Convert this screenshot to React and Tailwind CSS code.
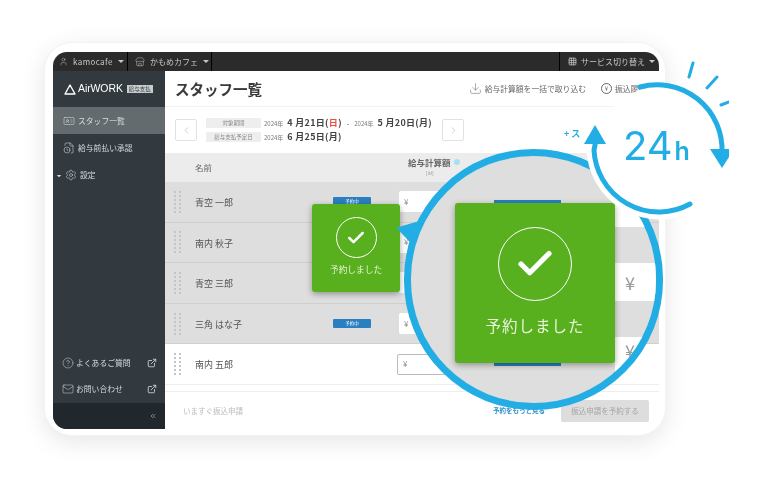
import { User, Store, Grid3x3, Download, ChevronLeft, ChevronRight, ChevronsLeft, IdCard, FileClock, Settings, CircleHelp, Mail, ExternalLink, Check } from "lucide-react";

const rows = [
  { name: "青空 一郎", badge: true, gray: true },
  { name: "南内 秋子", gray: true },
  { name: "青空 三郎", gray: true },
  { name: "三角 はな子", badge: true, gray: true },
  { name: "南内 五郎", gray: false },
];

const navItems = [
  { label: "スタッフ一覧", Icon: IdCard, active: true },
  { label: "給与前払い承認", Icon: FileClock },
  { label: "設定", Icon: Settings, caret: true },
];

function DragHandle() {
  return (
    <div className="grid grid-cols-2 gap-x-[3px] gap-y-[2px] w-[7px]">
      {Array.from({ length: 12 }).map((_, i) => (
        <span key={i} className="w-[2px] h-[2px] bg-[#c4c4c4]" />
      ))}
    </div>
  );
}

function Caret() {
  return <span className="inline-block w-0 h-0 border-x-[3px] border-x-transparent border-t-[3px] border-t-current" />;
}

function TopBar() {
  return (
    <div className="h-[19px] bg-[#2b2b2b] rounded-t-[14px] flex items-center text-[8px] text-[#c8c8c8] shrink-0">
      <div className="w-[75px] h-full flex items-center gap-[5px] pl-[6px] border-r border-black">
        <User size={9} strokeWidth={1.2} />
        <span className="tracking-[0.4px]">kamocafe</span>
        <Caret />
      </div>
      <div className="w-[84px] h-full flex items-center gap-[5px] pl-[7px] border-r border-black">
        <Store size={10} strokeWidth={1.2} />
        <span>かもめカフェ</span>
        <Caret />
      </div>
      <div className="ml-auto w-[100px] h-full flex items-center gap-[4px] pl-[8px] border-l border-black">
        <Grid3x3 size={9} strokeWidth={2} />
        <span>サービス切り替え</span>
        <Caret />
      </div>
    </div>
  );
}

function Sidebar() {
  return (
    <div className="w-[112px] bg-[#323a40] flex flex-col text-[7.8px] text-[#d8dbdc] shrink-0 rounded-bl-[14px] overflow-hidden">
      <div className="h-[36px] flex items-center pl-[11px] gap-[2px]">
        <svg width="12" height="11" viewBox="0 0 12 11" fill="none" stroke="#ffffff" strokeWidth="1.4">
          <path d="M6 1 L11 10 H1 Z" strokeLinejoin="round" />
        </svg>
        <span className="text-[10.5px] text-white tracking-[-0.1px] font-['Liberation_Sans',sans-serif]">AirWORK</span>
        <span className="ml-[2px] w-[26px] bg-[#c9cccd] text-[#323a40] text-[5.5px] text-center leading-[8px]">給与支払</span>
      </div>
      {navItems.map(({ label, Icon, active, caret }) => (
        <div key={label} className={`h-[27px] flex items-center gap-[3px] ${caret ? "pl-[3px]" : "pl-[10px]"} ${active ? "bg-[#646b6f]" : ""}`}>
          {caret && <span className="text-[#d8dbdc] scale-75"><Caret /></span>}
          <Icon size={12} strokeWidth={1.1} />
          <span>{label}</span>
        </div>
      ))}
      <div className="mt-auto">
        <div className="h-[26px] flex items-center pl-[9px] pr-[8px] gap-[2px]">
          <CircleHelp size={12} strokeWidth={1} />
          <span>よくあるご質問</span>
          <ExternalLink size={10} strokeWidth={2} className="ml-auto" />
        </div>
        <div className="h-[26px] mb-[1px] flex items-center pl-[9px] pr-[8px] gap-[2px]">
          <Mail size={12} strokeWidth={1} />
          <span>お問い合わせ</span>
          <ExternalLink size={10} strokeWidth={2} className="ml-auto" />
        </div>
        <div className="h-[26px] bg-[#20282d] flex items-center justify-end pr-[8px]">
          <ChevronsLeft size={8} strokeWidth={1.5} />
        </div>
      </div>
    </div>
  );
}

function Header() {
  return (
    <div className="h-[35px] flex items-center pl-[10px] shrink-0">
      <h1 className="text-[14.5px] font-bold text-[#3a3a3a]">スタッフ一覧</h1>
      <div className="ml-auto flex items-center text-[7.8px] text-[#666] pr-[12px]">
        <Download size={13} strokeWidth={1} />
        <span className="ml-[3px]">給与計算額を一括で取り込む</span>
        <span className="ml-[15px] w-[11px] h-[11px] rounded-full border border-[#666] flex items-center justify-center text-[6px]">¥</span>
        <span className="ml-[3px] w-[32px] overflow-hidden whitespace-nowrap">振込履歴</span>
      </div>
    </div>
  );
}

function DateBar() {
  return (
    <div className="h-[47px] flex items-center pl-[10px] border-t border-[#f2f2f2] shrink-0">
      <div className="w-[22px] h-[22px] border border-[#e2e2e2] rounded-[2px] flex items-center justify-center text-[#aaa]">
        <ChevronLeft size={11} strokeWidth={1.2} />
      </div>
      <div className="ml-[9px] w-[236px] flex flex-col gap-[4px] text-[#444]">
        <div className="flex items-center h-[10px]">
          <span className="w-[55px] h-[10px] bg-[#eeeeee] rounded-[1px] text-[5.5px] text-[#888] text-center leading-[10px]">対象期間</span>
          <span className="ml-[3px] text-[6px] text-[#777]">2024年</span>
          <span className="ml-[4px] text-[9px] font-bold tracking-[0.3px]">4 月21日(<span className="text-[#ef4b3f]">日</span>)</span>
          <span className="mx-[5px] text-[7px]">-</span>
          <span className="text-[6px] text-[#777]">2024年</span>
          <span className="ml-[4px] text-[9px] font-bold tracking-[0.3px]">5 月20日(月)</span>
        </div>
        <div className="flex items-center h-[10px]">
          <span className="w-[55px] h-[10px] bg-[#eeeeee] rounded-[1px] text-[5.5px] text-[#888] text-center leading-[10px]">給与支払予定日</span>
          <span className="ml-[3px] text-[6px] text-[#777]">2024年</span>
          <span className="ml-[4px] text-[9px] font-bold tracking-[0.3px]">6 月25日(月)</span>
        </div>
      </div>
      <div className="w-[22px] h-[22px] border border-[#e2e2e2] rounded-[2px] flex items-center justify-center text-[#aaa]">
        <ChevronRight size={11} strokeWidth={1.2} />
      </div>
      <span className="ml-[100px] mt-[8px] text-[9px] font-bold text-[#22aee5] whitespace-nowrap">+ ス</span>
    </div>
  );
}

function TableHead() {
  return (
    <div className="h-[29px] bg-[#ececec] flex shrink-0 text-[#666]">
      <span className="ml-[30px] self-center text-[8.5px]">名前</span>
      <div className="ml-[196px] mt-[3px] flex flex-col items-center">
        <div className="flex items-center gap-[3px]">
          <span className="text-[8.5px] font-bold">給与計算額</span>
          <span className="w-[6px] h-[6px] rounded-full bg-[#a8dff5]" />
        </div>
        <span className="text-[5px] text-[#999] mr-[8px]">[al]</span>
      </div>
    </div>
  );
}

function StaffRow({ row }) {
  return (
    <div className={`h-[40.6px] flex items-center pl-[9px] border-b ${row.gray ? "bg-[#dedede] border-[#cfcfcf]" : "bg-white border-[#eeeeee]"}`}>
      <DragHandle />
      <span className="ml-[14px] mt-[2px] w-[138px] text-[9px] text-[#555]">{row.name}</span>
      <div className={row.gray ? "w-[66px] flex" : "w-[64px] flex"}>
        {row.badge && <span className="w-[38px] h-[9px] bg-[#2a7fc0] text-white text-[4.5px] leading-[9px] text-center rounded-[1px]">予約中</span>}
      </div>
      <div className={`w-[105px] h-[21px] bg-white rounded-[2px] pl-[5px] flex items-center text-[8px] text-[#888] ${row.gray ? "" : "border border-[#bbb]"}`}>¥</div>
    </div>
  );
}

function Footer() {
  return (
    <div className="mt-auto h-[38px] flex items-center pl-[18px] pr-[10px] border-t border-[#eeeeee] shrink-0">
      <span className="text-[7.5px] text-[#bbbbbb]">いますぐ振込申請</span>
      <span className="ml-auto text-[6.5px] font-bold text-[#2a8fc8]">予約をもっと見る</span>
      <span className="ml-[16px] w-[88px] h-[22px] bg-[#dddddd] rounded-[2px] text-[7.5px] text-[#a5a5a5] leading-[22px] text-center">振込申請を予約する</span>
    </div>
  );
}

function Toast({ className, circle, check, stroke, text }) {
  return (
    <div className={`absolute bg-[#58b01e] rounded-[3px] shadow-[0_2px_6px_rgba(0,0,0,0.35)] flex flex-col items-center text-[#e9f5dc] ${className}`}>
      <div className={`rounded-full border border-white flex items-center justify-center text-white ${circle}`}>
        <Check size={check} strokeWidth={stroke} />
      </div>
      <span className={text}>予約しました</span>
    </div>
  );
}

function Magnifier() {
  return (
    <div className="absolute left-[404px] top-[149px] w-[259px] h-[261px] rounded-full border-[7px] border-[#22aee5] bg-[#dedede] overflow-hidden">
      <div className="absolute left-[204px] top-0 w-[46px] h-[71px] bg-white" />
      <div className="absolute left-[204px] top-[107px] w-[46px] h-[38px] bg-white text-[18px] text-[#999] flex items-center pl-[10px]">¥</div>
      <div className="absolute left-[204px] top-[181px] w-[46px] h-[42px] bg-white text-[18px] text-[#999] flex items-start pl-[10px]">¥</div>
      <div className="absolute left-[83px] top-[44px] w-[67px] h-[166px] bg-[#2a7fc0]" />
    </div>
  );
}

function Callout() {
  return (
    <svg className="absolute left-0 top-0" width="729" height="480" viewBox="0 0 729 480" fill="none">
      <path d="M397 228 L421 221 L414 246 Z" fill="#22aee5" stroke="#22aee5" strokeLinejoin="round" />
    </svg>
  );
}

function Clock24() {
  return (
    <>
      <svg className="absolute left-0 top-0" width="729" height="480" viewBox="0 0 729 480" fill="none">
        <circle cx="662" cy="152" r="66" fill="#ffffff" />
        <path d="M690 204 A65 65 0 0 1 594 150 L596 140" stroke="#ffffff" strokeWidth="15" />
        <path d="M640 87 A65 65 0 0 1 722 152" stroke="#22aee5" strokeWidth="5" strokeLinecap="round" />
        <path d="M710 149 H734 L722 168 Z" fill="#22aee5" />
        <path d="M690 204 A65 65 0 0 1 594 150 L596 140" stroke="#22aee5" strokeWidth="5" strokeLinecap="round" />
        <path d="M595 125 L606 144 H584 Z" fill="#22aee5" />
        <path d="M693 63 L689 77 M717 77 L707 88 M729 102 L721 105" stroke="#22aee5" strokeWidth="3" strokeLinecap="round" />
      </svg>
      <div className="absolute left-[623px] top-[118px] text-[40px] leading-[56px] text-[#22aee5] font-['Inter',sans-serif] whitespace-nowrap">
        24<span className="text-[25px] font-semibold ml-[2px]">h</span>
      </div>
    </>
  );
}

export default function App() {
  return (
    <div className="relative w-[762px] h-[480px] overflow-hidden bg-white font-['Noto_Sans_CJK_JP','Noto_Sans',sans-serif] blur-[0.5px]">
      <div className="pl-[44px] pt-[42px]">
        <div className="w-[622px] h-[394px] rounded-[28px] bg-white border border-[#f3f3f3] shadow-[0_6px_24px_rgba(0,0,0,0.10)] pl-[8px] pr-[6px] pt-[9px] pb-[6px]">
          <div className="h-[377px] flex flex-col">
            <TopBar />
            <div className="flex flex-1 min-h-0">
              <Sidebar />
              <div className="flex-1 flex flex-col min-w-0">
                <Header />
                <DateBar />
                <TableHead />
                {rows.map((row) => (
                  <StaffRow key={row.name} row={row} />
                ))}
                <Footer />
              </div>
            </div>
          </div>
        </div>
      </div>
      <Toast className="left-[312px] top-[204px] w-[88px] h-[88px] pt-[13px]" circle="w-[41px] h-[41px]" check={20} stroke={3} text="mt-[5px] text-[8.7px]" />
      <Callout />
      <Magnifier />
      <Toast className="left-[455px] top-[203px] w-[160px] h-[160px] pt-[24px]" circle="w-[74px] h-[74px]" check={42} stroke={3} text="mt-[13px] text-[15.5px] tracking-[1px]" />
      <Clock24 />
    </div>
  );
}
